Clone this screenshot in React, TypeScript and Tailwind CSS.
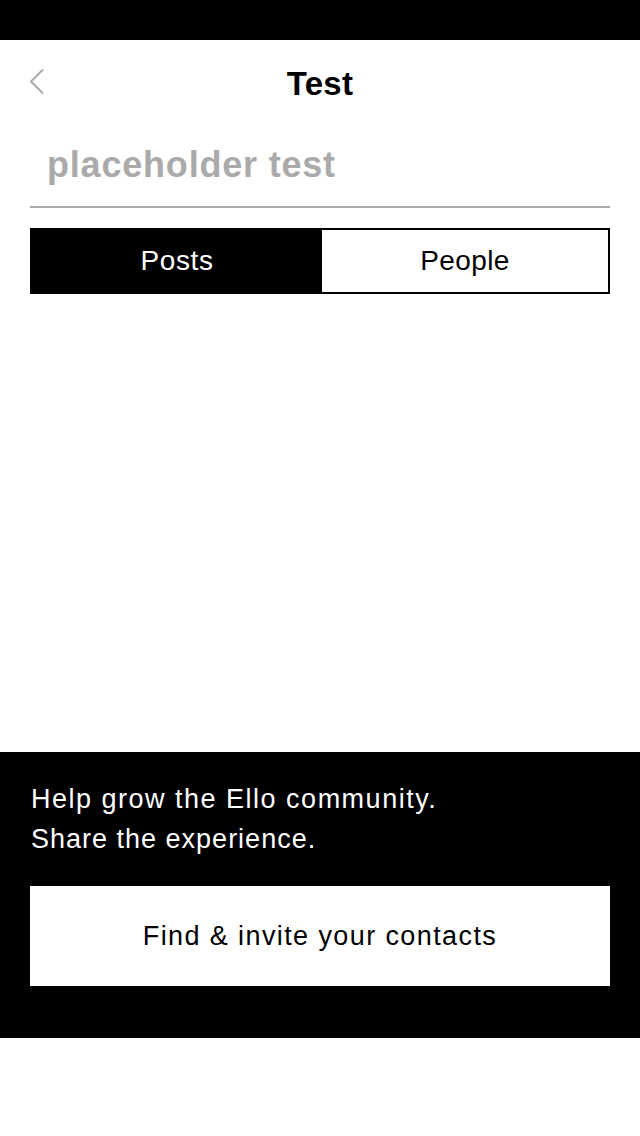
import React from "react";

export default function App() {
  return (
    <div
      className="w-[640px] h-[1136px] bg-white flex flex-col"
      style={{ fontFamily: '"Liberation Sans", Arial, sans-serif' }}
    >
      <div className="h-[40px] bg-black shrink-0" />
      <div className="relative h-[88px] flex items-center justify-center shrink-0">
        <svg
          className="absolute left-[28px] top-[28px]"
          width="18"
          height="28"
          viewBox="0 0 18 28"
          fill="none"
        >
          <path d="M15 1.5 L3 13.5 L15 25.5" stroke="#aaaaaa" strokeWidth="2" />
        </svg>
        <span className="text-[33px] text-black font-bold tracking-[0.3px] mt-[-1px]">Test</span>
      </div>
      <div className="mx-[30px] h-[80px] border-b-2 border-[#aaaaaa] flex items-center pl-[17px] shrink-0">
        <span className="text-[36px] font-bold text-[#aaaaaa] tracking-[0.8px] mt-[-4px]">
          placeholder test
        </span>
      </div>
      <div className="mx-[30px] mt-[20px] h-[66px] flex border-2 border-black shrink-0">
        <div className="w-[290px] bg-black text-white flex items-center justify-center text-[28px] tracking-[0.6px]">
          Posts
        </div>
        <div className="flex-1 bg-white text-black flex items-center justify-center text-[28px] tracking-[0.4px]">
          People
        </div>
      </div>
      <div className="h-[458px] shrink-0" />
      <div className="bg-black h-[286px] shrink-0 flex flex-col px-[30px] pt-[27px]">
        <div className="text-white text-[27px] leading-[40px] pl-[1px]">
          <div className="tracking-[1.5px]">Help grow the Ello community.</div>
          <div className="tracking-[1.0px]">Share the experience.</div>
        </div>
        <div className="mt-[27px] h-[100px] bg-white flex items-center justify-center text-[27px] text-black tracking-[1.4px]">
          Find &amp; invite your contacts
        </div>
      </div>
    </div>
  );
}
